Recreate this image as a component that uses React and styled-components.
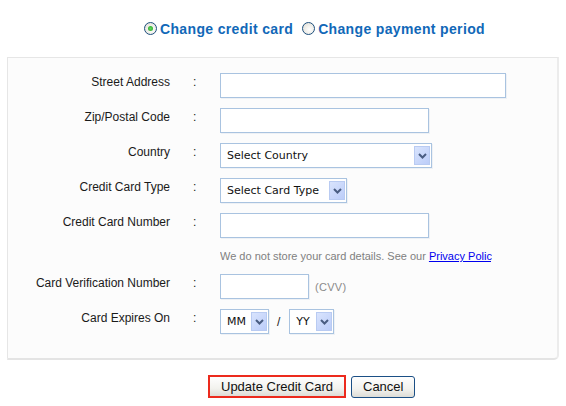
import React from "react";
import styled, { createGlobalStyle } from "styled-components";

const Global = createGlobalStyle`
  html, body { margin: 0; padding: 0; background: #ffffff; }
  body { font-family: "Liberation Sans", Arial, sans-serif; font-size: 12px; color: #1a1a1a; }
`;

const Page = styled.div`
  width: 566px;
  height: 406px;
  display: flex;
  flex-direction: column;
`;

const RadioRow = styled.div`
  display: flex;
  align-items: center;
  gap: 9px;
  padding: 19px 0 0 144px;
  height: 19px;
`;

const RadioItem = styled.label`
  display: flex;
  align-items: center;
  gap: 3px;
  font-weight: bold;
  font-size: 14px;
  letter-spacing: 0.35px;
  color: #1168b8;
`;

const RadioDot = styled.span`
  width: 11px;
  height: 11px;
  border-radius: 50%;
  border: 1px solid #1d4f7d;
  background: radial-gradient(circle at 60% 60%, #ffffff 0%, #e4e2da 80%, #d4d2c8 100%);
  display: inline-flex;
  align-items: center;
  justify-content: center;
  &::after {
    content: "";
    width: 5px;
    height: 5px;
    border-radius: 50%;
    background: ${(p) => (p.$checked ? "radial-gradient(circle, #62d85e 0%, #21a121 100%)" : "transparent")};
  }
`;

const Panel = styled.div`
  margin: 19px 0 0 7px;
  width: 549px;
  height: 285px;
  border: 1px solid #e6e6e6;
  border-bottom: 2px solid #e4e4e4;
  border-right: 2px solid #ececec;
  border-radius: 0 0 5px 0;
  background: #fcfcfc;
  padding-top: 15px;
  box-sizing: content-box;
`;

const FormGrid = styled.div`
  display: grid;
  grid-template-columns: 162px 50px 1fr;
  row-gap: 10px;
`;

const Label = styled.div`
  text-align: right;
  padding-top: 2px;
  line-height: 14px;
  color: #1a1a1a;
`;

const Colon = styled.div`
  padding: 2px 0 0 23px;
  line-height: 14px;
`;

const Field = styled.div`
  display: flex;
  align-items: center;
  gap: 6px;
  min-height: ${(p) => (p.$note ? 16 : 25)}px;
`;

const TextInput = styled.div`
  box-sizing: border-box;
  width: ${(p) => p.$w}px;
  height: 25px;
  border: 1px solid #a9c3e0;
  background: #ffffff;
  box-shadow: 1px 1px 0 #eef1f5;
`;

const SelectBox = styled.div`
  box-sizing: border-box;
  width: ${(p) => p.$w}px;
  height: 25px;
  border: 1px solid #a9c3e0;
  background: #ffffff;
  box-shadow: 1px 1px 0 #eef1f5;
  display: flex;
  align-items: center;
  justify-content: space-between;
  padding: 0 1px 0 6px;
  font-family: "DejaVu Sans", Verdana, sans-serif;
  font-size: 11px;
  color: #111;
`;

const ArrowBtn = styled.span`
  box-sizing: border-box;
  width: 16px;
  height: 19px;
  border: 1px solid #b9cbf2;
  background: linear-gradient(135deg, #d9e4fd 0%, #bccdf9 100%);
  display: flex;
  align-items: center;
  justify-content: center;
`;

const Note = styled.div`
  width: 272px;
  overflow: hidden;
  white-space: nowrap;
  font-size: 11px;
  line-height: 16px;
  color: #808080;
`;

const Link = styled.a`
  color: #0000ee;
  text-decoration: underline;
`;

const Hint = styled.span`
  font-size: 11px;
  color: #8a8a8a;
  letter-spacing: 0.3px;
`;

const Slash = styled.span`
  font-size: 12px;
  margin: 0 3px 0 2px;
`;

const Buttons = styled.div`
  display: flex;
  align-items: center;
  gap: 5px;
  padding: 15px 0 0 208px;
`;

const Btn = styled.button`
  font-family: "Liberation Sans", Arial, sans-serif;
  font-size: 13px;
  color: #111;
  height: ${(p) => (p.$primary ? 23 : 22)}px;
  padding: 0 ${(p) => (p.$primary ? 11 : 11)}px;
  border: ${(p) => (p.$primary ? "2px solid #ec2a1d" : "1px solid #1b4f85")};
  border-radius: ${(p) => (p.$primary ? 0 : 3)}px;
  background: linear-gradient(#fefefe 0%, #f2f2ee 60%, #dddcd6 100%);
  cursor: pointer;
`;

const Chevron = () => (
  <svg width="9" height="6" viewBox="0 0 9 6">
    <path d="M1 1 L4.5 4.5 L8 1" fill="none" stroke="#4a5d82" strokeWidth="2" />
  </svg>
);

const Select = ({ w, children }) => (
  <SelectBox $w={w}>
    <span>{children}</span>
    <ArrowBtn>
      <Chevron />
    </ArrowBtn>
  </SelectBox>
);

const Row = ({ label, children, colon = true, note = false }) => (
  <>
    <Label>{label}</Label>
    <Colon>{colon ? ":" : ""}</Colon>
    <Field $note={note}>{children}</Field>
  </>
);

export default function App() {
  return (
    <Page>
      <Global />
      <RadioRow>
        <RadioItem>
          <RadioDot $checked />
          Change credit card
        </RadioItem>
        <RadioItem>
          <RadioDot />
          Change payment period
        </RadioItem>
      </RadioRow>
      <Panel>
        <FormGrid>
          <Row label="Street Address">
            <TextInput $w={286} />
          </Row>
          <Row label="Zip/Postal Code">
            <TextInput $w={209} />
          </Row>
          <Row label="Country">
            <Select w={212}>Select Country</Select>
          </Row>
          <Row label="Credit Card Type">
            <Select w={127}>Select Card Type</Select>
          </Row>
          <Row label="Credit Card Number">
            <TextInput $w={209} />
          </Row>
          <Row label="" colon={false} note>
            <Note>
              We do not store your card details. See our <Link href="#">Privacy Policy</Link>
            </Note>
          </Row>
          <Row label="Card Verification Number">
            <TextInput $w={89} />
            <Hint>(CVV)</Hint>
          </Row>
          <Row label="Card Expires On">
            <Select w={49}>MM</Select>
            <Slash>/</Slash>
            <Select w={45}>YY</Select>
          </Row>
        </FormGrid>
      </Panel>
      <Buttons>
        <Btn $primary>Update Credit Card</Btn>
        <Btn>Cancel</Btn>
      </Buttons>
    </Page>
  );
}
